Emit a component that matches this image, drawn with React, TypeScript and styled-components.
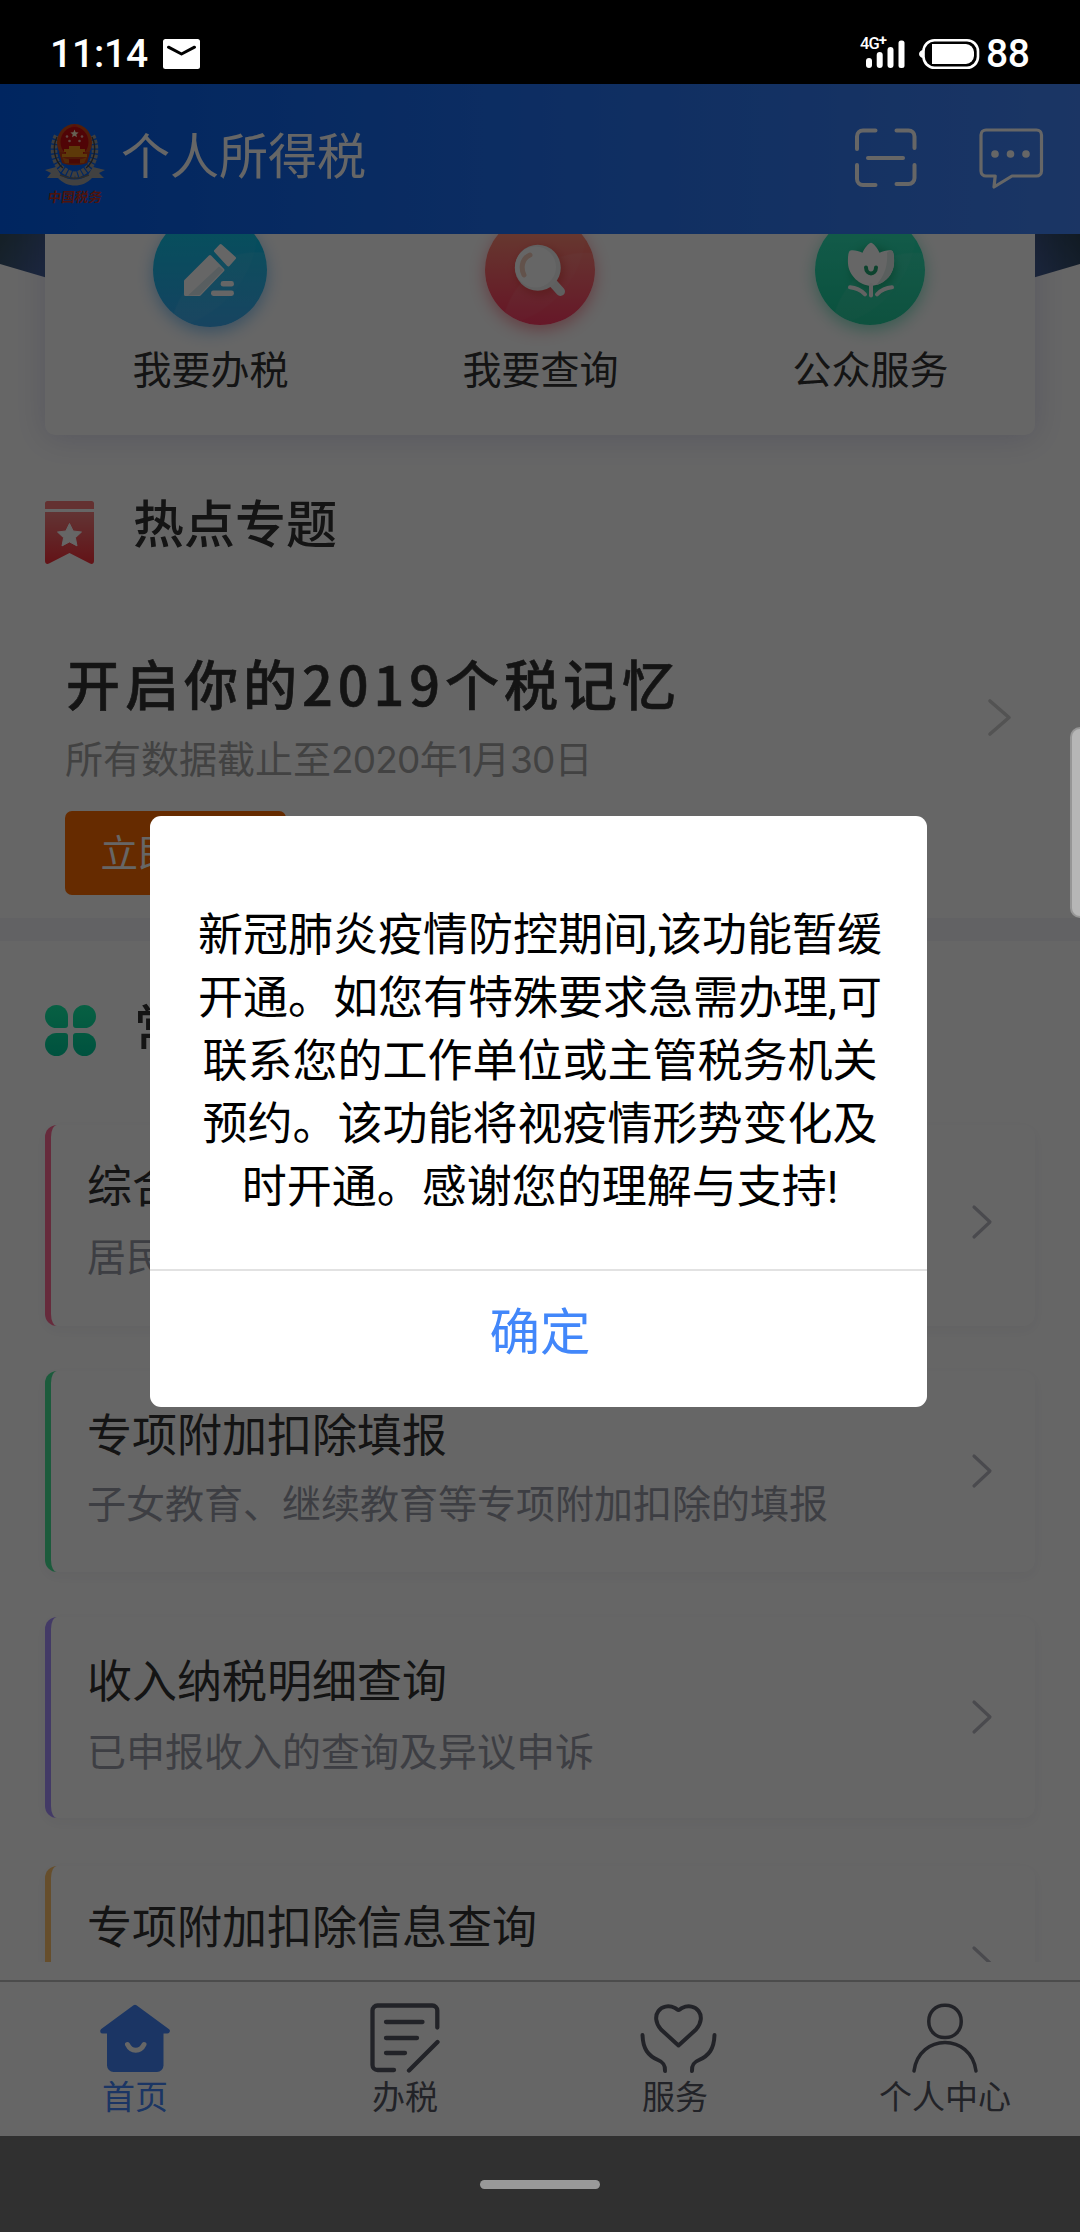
import React from 'react';
import styled, { createGlobalStyle } from 'styled-components';

const cjk = `"Noto Sans CJK SC", "Noto Sans", sans-serif`;
const latinFirst = `Roboto, "Noto Sans CJK SC", sans-serif`;

const GlobalStyle = createGlobalStyle`
  * { box-sizing: border-box; }
  body { margin: 0; background: #000; font-family: ${cjk}; }
  svg { display: block; flex: none; overflow: visible; }
`;

const Screen = styled.div`
  width: 1080px;
  height: 2232px;
  display: flex;
  flex-direction: column;
  overflow: hidden;
  position: relative;
`;

/* ---------- status bar ---------- */
const StatusBar = styled.div`
  height: 84px;
  flex: none;
  background: #000;
  color: #fff;
  display: flex;
  justify-content: space-between;
  padding: 24px 50px 0 50px;
  font-family: ${latinFirst};
  font-weight: 500;
`;
const StatusGroup = styled.div`
  display: flex;
  height: 60px;
  align-items: center;
`;
const Clock = styled.span`
  width: 113px;
  font-size: 39px;
  line-height: 62px;
  letter-spacing: -0.2px;
`;
const Percent = styled.span`
  margin-left: 6px;
  width: 44px;
  font-size: 39px;
  line-height: 60px;
  letter-spacing: -0.5px;
`;
const Network = styled.span`
  align-self: flex-start;
  margin-right: -21px;
  margin-top: 11px;
  font-size: 16.5px;
  line-height: 18px;
  width: 27px;
  letter-spacing: -0.9px;
`;
const NetworkPlus = styled.sup`
  font-size: 15px;
  line-height: 0;
  font-weight: 700;
  vertical-align: 4px;
`;
const StatusGap = styled.div`
  width: 14px;
`;

/* ---------- app ---------- */
const AppArea = styled.div`
  height: 2052px;
  flex: none;
  background: #fff;
  display: flex;
  flex-direction: column;
  position: relative;
`;
const Header = styled.header`
  height: 150px;
  flex: none;
  display: flex;
  align-items: center;
  padding: 0 37px 0 45px;
  background: linear-gradient(90deg, #005eef 0%, #4486fa 100%);
`;
const Brand = styled.div`
  width: 60px;
  height: 82px;
  margin-top: 12px;
  display: flex;
  flex-direction: column;
  align-items: center;
`;
const BrandName = styled.span`
  font-size: 13.5px;
  line-height: 18px;
  font-weight: 700;
  color: #c03222;
  transform: skewX(-8deg);
  margin-top: 1px;
  white-space: nowrap;
`;
const AppTitle = styled.h1`
  margin: 0 auto 12px 16px;
  font-size: 49px;
  line-height: 72px;
  font-weight: 400;
  color: #fff;
`;
const HeaderIcons = styled.div`
  display: flex;
  gap: 62px;
  margin-top: -2px;
`;

const Scroller = styled.main`
  height: 1728px;
  flex: none;
  overflow: hidden;
  position: relative;
`;
const HeroEdge = styled.svg`
  position: absolute;
  left: 0;
  top: 0;
`;
const QuickCard = styled.section`
  position: relative;
  margin: -60px 45px 0;
  height: 261px;
  padding-top: 39px;
  border-radius: 10px;
  background: #fff;
  display: grid;
  grid-template-columns: repeat(3, 1fr);
  box-shadow: 0 3px 32px rgba(70, 70, 170, 0.2);
`;
const QuickItem = styled.div`
  display: flex;
  flex-direction: column;
  align-items: center;
`;
const Bubble = styled.div<{ $size: number; $from: string; $to: string; $glow: string }>`
  width: ${p => p.$size}px;
  height: ${p => p.$size}px;
  margin: ${p => (114 - p.$size) / 2}px 0;
  border-radius: 50%;
  overflow: visible;
  background:
    radial-gradient(circle at 92% 112%, rgba(255, 255, 255, 0.07) 0 53%, transparent 54%),
    radial-gradient(circle at 0% 10%, rgba(255, 255, 255, 0.03) 0 68%, transparent 69%),
    linear-gradient(180deg, ${p => p.$from}, ${p => p.$to});
  box-shadow: 0 5px 16px ${p => p.$glow};
`;
const QuickLabel = styled.span`
  margin-top: 13px;
  padding-left: 1px;
  font-size: 39px;
  line-height: 54px;
  color: #333;
`;

const SectionHead = styled.div<{ $top: number }>`
  display: flex;
  align-items: center;
  height: 72px;
  margin-top: ${p => p.$top}px;
  padding-left: 45px;
`;
const SectionTitle = styled.h2<{ $gap: number; $lift: number }>`
  margin: 0 0 ${p => p.$lift * 2}px ${p => p.$gap}px;
  font-size: 51px;
  line-height: 72px;
  font-weight: 500;
  color: #333;
`;

const Topic = styled.section`
  height: 350px;
  display: flex;
  align-items: flex-start;
  justify-content: space-between;
  padding: 79px 69px 0 65px;
`;
const TopicText = styled.div`
  display: flex;
  flex-direction: column;
  align-items: flex-start;
`;
const TopicTitle = styled.div`
  padding-left: 1px;
  font-size: 54px;
  line-height: 72px;
  font-weight: 500;
  letter-spacing: 5px;
  color: #333;
  -webkit-text-stroke: 0.6px #333;
  white-space: nowrap;
`;
const TopicDate = styled.div`
  margin-top: 12px;
  height: 52px;
  font-size: 38px;
  line-height: 52px;
  font-weight: 400;
  color: #a6a6a6;
  white-space: nowrap;
`;
const Digits = styled.span`
  font-family: Inter, Roboto, sans-serif;
  font-size: 37px;
  line-height: 0;
  letter-spacing: -0.8px;
`;
const TopicButton = styled.div`
  margin-top: 28px;
  width: 221px;
  height: 84px;
  border-radius: 7px;
  background: #ff6b00;
  color: #fff;
  font-size: 37.5px;
  line-height: 80px;
  text-align: center;
`;
const TopicArrow = styled.div`
  margin-top: 52px;
`;
const Band = styled.div`
  height: 23px;
  background: #f4f4f9;
`;

const ServiceCard = styled.article<{ $accent: string; $gap: number; $pad: number }>`
  height: 201px;
  margin: ${p => p.$gap}px 45px 0;
  padding: ${p => p.$pad}px 43px 0 36px;
  border-radius: 12px;
  border-left: 6px solid ${p => p.$accent};
  background: #fff;
  box-shadow: 0 4px 14px rgba(30, 40, 90, 0.05);
  display: flex;
  justify-content: space-between;
`;
const ServiceTitle = styled.div`
  font-size: 45px;
  line-height: 64px;
  color: #333;
`;
const ServiceNote = styled.div<{ $gap: number }>`
  margin-top: ${p => p.$gap}px;
  font-size: 39px;
  line-height: 56px;
  color: #9a9ca7;
`;
const ServiceArrow = styled.div`
  margin-top: 53px;
`;

const TabBar = styled.nav`
  margin-top: 18px;
  height: 156px;
  border-top: 2px solid #bebebe;
  display: grid;
  grid-template-columns: repeat(4, 1fr);
`;
const Tab = styled.div<{ $active?: boolean }>`
  display: flex;
  flex-direction: column;
  align-items: center;
  padding-top: 21px;
  font-size: 33px;
  line-height: 46px;
  color: ${p => (p.$active ? '#4486fa' : '#565864')};
`;
const TabLabel = styled.span`
  margin-top: -1px;
`;

/* ---------- dialog ---------- */
const Overlay = styled.div`
  position: absolute;
  inset: 0;
  background: rgba(0, 0, 0, 0.6);
`;
const Dialog = styled.div`
  position: absolute;
  left: 150px;
  top: 732px;
  width: 777px;
  height: 591px;
  border-radius: 11px;
  background: #fff;
  display: flex;
  flex-direction: column;
`;
const Message = styled.div`
  height: 453px;
  padding: 88px 0 0 3px;
  text-align: center;
  font-family: ${latinFirst};
  font-size: 45px;
  line-height: 63px;
  color: #000;
`;
const MessageLine = styled.div`
  white-space: nowrap;
`;
const Confirm = styled.div`
  flex: 1;
  padding-left: 3px;
  border-top: 2px solid #e2e2e2;
  color: #4287fa;
  font-size: 50.5px;
  line-height: 115px;
  text-align: center;
`;
const EdgeHandle = styled.div`
  position: absolute;
  right: 0;
  top: 643px;
  width: 10px;
  height: 191px;
  border-radius: 10px 0 0 10px;
  background: #b6b6b6;
  border: 2px solid #969696;
  border-right: 0;
`;

const NavArea = styled.div`
  height: 96px;
  flex: none;
  background: #303030;
  display: flex;
  justify-content: center;
  padding-top: 44px;
`;
const HomePill = styled.div`
  width: 120px;
  height: 9px;
  border-radius: 5px;
  background: #999;
`;

/* ---------- icons ---------- */
const MailIcon = () => (
  <svg width="37" height="30" viewBox="0 0 37 30">
    <rect width="37" height="30" rx="2.5" fill="#fff" />
    <path d="M5.5 8.2 18.5 15 31.5 8.2" fill="none" stroke="#000" strokeWidth="3" strokeLinecap="round" strokeLinejoin="round" />
  </svg>
);

const SignalIcon = () => (
  <svg width="39" height="30" viewBox="0 0 39 30" fill="#fff">
    <rect x="0" y="19" width="6" height="10" rx="3" />
    <rect x="10.7" y="13" width="6" height="16" rx="3" />
    <rect x="21.5" y="8" width="6" height="21" rx="3" />
    <rect x="32.5" y="1.5" width="6" height="27.5" rx="2.5" />
  </svg>
);

const BatteryIcon = () => (
  <svg width="61" height="30" viewBox="0 0 61 30">
    <path d="M4.5 11v8C2 19 0 17 0 15s2-4 4.5-4Z" fill="#fff" />
    <rect x="4.5" y="1.3" width="54.5" height="27.4" rx="11" fill="none" stroke="#fff" strokeWidth="2.6" />
    <path d="M13 5h34a8.500 8.500 0 0 1 8 8v4a8.500 8.500 0 0 1-8 8H13Z" fill="#fff" />
  </svg>
);

const Emblem = () => (
  <svg width="60" height="62" viewBox="0 0 60 62">
    <g fill="none" stroke="#9c9c9c" strokeWidth="6.500" strokeDasharray="3.500 1.200">
      <path d="M12 12C7 22 8 38 17 45c4 3 8 5 13 6" />
      <path d="M47 12c5 10 4 26-5 33-4 3-7 5-12 6" />
    </g>
    <g fill="none" stroke="#444" strokeWidth="1.400">
      <path d="M12 13C7 23 9 37 18 44" />
      <path d="M47 13c5 10 3 24-6 31" />
    </g>
    <ellipse cx="29.500" cy="18.500" rx="17.500" ry="18.500" fill="#d04a18" />
    <path d="M14 28l3 11c8 3 17 3 25 0l3-11Z" fill="#c43c14" />
    <path d="M29.500 0l4 3.500-4 2-4-2Z" fill="#e02a20" />
    <ellipse cx="29.500" cy="18" rx="14" ry="15" fill="#c80a10" />
    <path d="M29.500 5.500l1.100 2.800 3 .2-2.300 1.900.7 2.900-2.500-1.600-2.500 1.600.7-2.900-2.300-1.900 3-.2Z" fill="#fff2d0" />
    <g fill="#eeb0a0">
      <circle cx="22" cy="12.500" r="1.300" /><circle cx="37" cy="12.500" r="1.300" />
      <circle cx="24.500" cy="17" r="1.300" /><circle cx="34.500" cy="17" r="1.300" />
    </g>
    <path d="M24 22h11v3h5v3h-2v2h4v3H17v-3h4v-2h-2v-3h5Z" fill="#e89018" />
    <path d="M17 33c7 4 18 4 25 0l-3 6H20Z" fill="#d06a18" />
    <path d="M24 35h11v4.500H24Z" fill="#b8180e" />
    <path d="M0 46l11-3 5 8c7 6 20 6 27 0l5-8 12 3-6 3 5 5-12 0C38 64 22 64 13 54L2 54l4-5Z" fill="#a4a4a4" />
    <path d="M15 51c9 4 20 4 29 0" fill="none" stroke="#6b6b6b" strokeWidth="1.600" />
  </svg>
);

const ScanIcon = () => (
  <svg width="62" height="60" viewBox="0 0 62 60" fill="none" stroke="#fff" strokeWidth="4" strokeLinecap="round">
    <path d="M20.500 2.500H8a6 6 0 0 0-6 6v12.500" />
    <path d="M41.500 2.500h12a6 6 0 0 1 6 6v11.500" />
    <path d="M2 37v14a6 6 0 0 0 6 6h12.500" />
    <path d="M59.500 37v13a6 6 0 0 1-6 6h-12" />
    <path d="M13 30h35" />
  </svg>
);

const ChatIcon = () => (
  <svg width="64" height="61" viewBox="0 0 64 61">
    <path d="M7 2h50.500a5 5 0 0 1 5 5v36a5 5 0 0 1-5 5H33L15 59l1.200-11H7a5 5 0 0 1-5-5V7a5 5 0 0 1 5-5Z" fill="none" stroke="#fff" strokeWidth="3.200" strokeLinejoin="round" />
    <g fill="#fff"><circle cx="16" cy="26" r="3.800" /><circle cx="31.500" cy="26" r="3.800" /><circle cx="47" cy="26" r="3.800" /></g>
  </svg>
);

const PencilIcon = () => (
  <svg width="114" height="114" viewBox="0 0 114 114" fill="#fff" stroke="#fff" strokeWidth="3" strokeLinejoin="round">
    <path d="M32.500 81.500V68L57 43.500 70 57 46.500 81.500Z" />
    <path d="M35 82.500 66 53.500 70.500 57 46.500 82Z" fill="#dbeaf0" stroke="none" />
    <path d="M67.700 32.500 81.500 45 75.300 52 62.500 38Z" />
    <rect x="67.700" y="68" width="13.200" height="5.600" rx="2.400" stroke="none" />
    <rect x="58" y="77.600" width="22.900" height="5.400" rx="2.400" stroke="none" />
  </svg>
);

const SoftShade = styled.circle<{ $blur: number }>`
  filter: blur(${p => p.$blur}px);
`;

const SearchIcon = () => (
  <svg width="110" height="110" viewBox="0 0 110 110">
    <SoftShade $blur={4} cx="55" cy="56" r="24" fill="#c02010" opacity="0.35" />
    <path d="M67 67l8.500 9.500" stroke="#ededed" strokeWidth="9" strokeLinecap="round" />
    <circle cx="52.800" cy="52.800" r="23" fill="#f2f2f2" />
    <circle cx="50.500" cy="52" r="20.500" fill="#fff" />
    <path d="M45 40c-9 4-9 14-6 20" fill="none" stroke="#f4cdbb" strokeWidth="5" strokeLinecap="round" />
  </svg>
);

const TulipIcon = () => (
  <svg width="110" height="110" viewBox="0 0 110 110">
    <SoftShade $blur={5} cx="58" cy="54" r="22" fill="#007a3c" opacity="0.4" />
    <path d="M56 27.700c2 0 7 6 8.500 10 4-2 9-3 12-2.300 2.500.6 2.800 8 2.500 13-.6 12-12 22.300-23 22.300S33.600 60.400 33 48.400c-.3-5 0-12.400 2.500-13 3-.7 8 .3 12 2.300 1.500-4 6.500-10 8.500-10Z" fill="#fff" />
    <path d="M72 37.500c1 14-3 24-11 32.500 10-2 17.500-11 18-21.500.3-5 0-12.500-2.500-13-1.500 0-3 .7-4.500 2Z" fill="#e2eeea" />
    <path d="M51 52.500c.3 8 9.700 8 10 0" fill="none" stroke="#22a873" strokeWidth="4" strokeLinecap="round" />
    <g fill="none" stroke="#f6f6f6" strokeWidth="4" strokeLinecap="round">
      <path d="M56 70v10.500" />
      <path d="M35 72.300c6 .5 11 3 15 7" />
      <path d="M77 72.300c-6 .5-11 3-15 7" />
    </g>
  </svg>
);

const BookmarkIcon = () => (
  <svg width="49" height="63" viewBox="0 0 49 63">
    <defs>
      <linearGradient id="ribbon" x1="0" y1="0" x2="0" y2="1">
        <stop offset="0" stopColor="#f48282" />
        <stop offset="1" stopColor="#f8303a" />
      </linearGradient>
    </defs>
    <path d="M2.500 0h44A2.500 2.500 0 0 1 49 2.500V8H0V2.500A2.500 2.500 0 0 1 2.500 0Z" fill="#f97c7c" />
    <path d="M0 11h49v49c0 2.500-2 3.500-4 2.500L24.500 52 4 62.500C2 63.500 0 62.500 0 60Z" fill="url(#ribbon)" />
    <path d="M24.500 22.500l3.700 7.500 8.300 1-6.100 5.700 1.600 8.200-7.500-4-7.500 4 1.600-8.200-6.100-5.700 8.300-1Z" fill="#fff" stroke="#fff" strokeWidth="1" strokeLinejoin="round" />
  </svg>
);

const CloverIcon = () => (
  <svg width="51" height="51" viewBox="0 0 51 51">
    <defs>
      <linearGradient id="leaf" gradientUnits="userSpaceOnUse" x1="0" y1="0" x2="0" y2="51">
        <stop offset="0" stopColor="#14f0a8" />
        <stop offset="1" stopColor="#00cc9c" />
      </linearGradient>
    </defs>
    <g fill="url(#leaf)">
      <path d="M11.500 0A11.500 11.500 0 0 1 23 11.500V20a3 3 0 0 1-3 3h-8.500a11.500 11.500 0 0 1 0-23Z" />
      <path d="M39.500 0a11.500 11.500 0 0 1 0 23H31a3 3 0 0 1-3-3v-8.500A11.500 11.500 0 0 1 39.500 0Z" />
      <path d="M11.500 28H20a3 3 0 0 1 3 3v8.500A11.500 11.500 0 1 1 11.500 28Z" />
      <path d="M31 28h8.500A11.500 11.500 0 1 1 28 39.500V31a3 3 0 0 1 3-3Z" />
    </g>
  </svg>
);

const Chevron = ({ w, h, stroke, color }: { w: number; h: number; stroke: number; color: string }) => (
  <svg width={w} height={h} viewBox={`0 0 ${w} ${h}`} fill="none" stroke={color} strokeWidth={stroke} strokeLinecap="round" strokeLinejoin="round">
    <path d={`M2 2 L${w - 2} ${h / 2} L2 ${h - 2}`} />
  </svg>
);

const HomeIcon = () => (
  <svg width="70" height="70" viewBox="0 0 70 70">
    <path d="M35 4.200 67.300 28 64 28H6L2.700 28Z" fill="currentColor" stroke="currentColor" strokeWidth="5" strokeLinejoin="round" />
    <path d="M7 27H63.500V62.500a6.500 6.500 0 0 1-6.500 6.500H13.500A6.500 6.500 0 0 1 7 62.500Z" fill="currentColor" />
    <path d="M27.500 41.500c3.500 7.500 13 7.500 16.500 0" fill="none" stroke="#fff" strokeWidth="5" strokeLinecap="round" />
  </svg>
);

const FormIcon = () => (
  <svg width="70" height="70" viewBox="0 0 70 70" fill="none" stroke="currentColor" strokeWidth="4.300" strokeLinecap="round">
    <path d="M67.300 24.500V7.500a5 5 0 0 0-5-5H7.500a5 5 0 0 0-5 5v54.500a5 5 0 0 0 5 5H24" />
    <path d="M16 19h36.500M16 35h31M16 50h19M67.500 39 39 67.500" />
  </svg>
);

const CareIcon = () => (
  <svg width="70" height="70" viewBox="-7 0 70 70" fill="none" stroke="currentColor" strokeWidth="4" strokeLinecap="round" strokeLinejoin="round">
    <g transform="translate(-7 0)">
      <path d="M38.500 42.500 21 26.500c-12-14 .5-28 14-21.500 2.500 1.500 2.500 2 3.500 2s1-.5 3.500-2c13.500-6.500 26 7.500 14 21.500Z" />
      <path d="M2.500 32C3 46 8 52.500 18 57c5 2 7.500 4.500 7 11" />
      <path d="M74.500 32C74 46 69 52.500 59 57c-5 2-7.500 4.500-7 11" />
    </g>
  </svg>
);

const UserIcon = () => (
  <svg width="66" height="70" viewBox="0 0 66 70" fill="none" stroke="currentColor" strokeWidth="3.500" strokeLinecap="round">
    <rect x="16.800" y="2.200" width="32.400" height="32.400" rx="15.500" />
    <path d="M2 68c5-38 57-38 62 0" />
  </svg>
);

const services = [
  { title: '综合所得年度汇算', note: '居民个人综合所得年度汇算', accent: '#ff6b96', gap: 57, pad: 27, noteGap: 10 },
  { title: '专项附加扣除填报', note: '子女教育、继续教育等专项附加扣除的填报', accent: '#46e496', gap: 45, pad: 30, noteGap: 8 },
  { title: '收入纳税明细查询', note: '已申报收入的查询及异议申诉', accent: '#a891ff', gap: 45, pad: 30, noteGap: 10 },
  { title: '专项附加扣除信息查询', note: '', accent: '#ffc46e', gap: 48, pad: 27, noteGap: 10 },
];

const message = [
  '新冠肺炎疫情防控期间,该功能暂缓',
  '开通。如您有特殊要求急需办理,可',
  '联系您的工作单位或主管税务机关',
  '预约。该功能将视疫情形势变化及',
  '时开通。感谢您的理解与支持!',
];

export default function App() {
  return (
    <Screen lang="zh-CN">
      <GlobalStyle />
      <StatusBar>
        <StatusGroup>
          <Clock>11:14</Clock>
          <MailIcon />
        </StatusGroup>
        <StatusGroup>
          <Network>4G<NetworkPlus>+</NetworkPlus></Network>
          <SignalIcon />
          <StatusGap />
          <BatteryIcon />
          <Percent>88</Percent>
        </StatusGroup>
      </StatusBar>

      <AppArea>
        <Header>
          <Brand>
            <Emblem />
            <BrandName>中国税务</BrandName>
          </Brand>
          <AppTitle>个人所得税</AppTitle>
          <HeaderIcons>
            <ScanIcon />
            <ChatIcon />
          </HeaderIcons>
        </Header>

        <Scroller>
          <HeroEdge width="1080" height="50" viewBox="0 0 1080 50">
            <defs>
              <linearGradient id="heroLeft" x1="0" y1="0" x2="1" y2="0.6">
                <stop offset="0" stopColor="#34505f" />
                <stop offset="1" stopColor="#445f96" />
              </linearGradient>
              <linearGradient id="heroRight" x1="0" y1="0.6" x2="1" y2="0">
                <stop offset="0" stopColor="#405b8c" />
                <stop offset="1" stopColor="#2b4358" />
              </linearGradient>
            </defs>
            <path d="M0 0H46V43.500L0 30Z" fill="url(#heroLeft)" />
            <path d="M1034 0H1080V30L1034 43.500Z" fill="url(#heroRight)" />
          </HeroEdge>
          <QuickCard>
            <QuickItem>
              <Bubble $size={114} $from="#04c8e6" $to="#2ca4f0" $glow="rgba(30,150,240,.5)"><PencilIcon /></Bubble>
              <QuickLabel>我要办税</QuickLabel>
            </QuickItem>
            <QuickItem>
              <Bubble $size={110} $from="#ff9a78" $to="#ff2c58" $glow="rgba(250,60,80,.5)"><SearchIcon /></Bubble>
              <QuickLabel>我要查询</QuickLabel>
            </QuickItem>
            <QuickItem>
              <Bubble $size={110} $from="#2ce6ba" $to="#12c896" $glow="rgba(20,200,150,.5)"><TulipIcon /></Bubble>
              <QuickLabel>公众服务</QuickLabel>
            </QuickItem>
          </QuickCard>

          <SectionHead $top={61}>
            <BookmarkIcon />
            <SectionTitle $gap={39} $lift={11}>热点专题</SectionTitle>
          </SectionHead>

          <Topic>
            <TopicText>
              <TopicTitle>开启你的2019个税记忆</TopicTitle>
              <TopicDate>
                所有数据截止至<Digits>2020</Digits>年<Digits>1</Digits>月<Digits>30</Digits>日
              </TopicDate>
              <TopicButton>立即查看</TopicButton>
            </TopicText>
            <TopicArrow>
              <Chevron w={23} h={37} stroke={3.6} color="#cfcfcf" />
            </TopicArrow>
          </Topic>
          <Band />

          <SectionHead $top={53}>
            <CloverIcon />
            <SectionTitle $gap={38} $lift={5}>常用业务</SectionTitle>
          </SectionHead>

          {services.map(s => (
            <ServiceCard key={s.title} $accent={s.accent} $gap={s.gap + (s.gap === 57 ? 2 : 0)} $pad={s.pad}>
              <div>
                <ServiceTitle>{s.title}</ServiceTitle>
                <ServiceNote $gap={s.noteGap}>{s.note}</ServiceNote>
              </div>
              <ServiceArrow>
                <Chevron w={20} h={34} stroke={3.2} color="#b9b9c2" />
              </ServiceArrow>
            </ServiceCard>
          ))}
        </Scroller>

        <TabBar>
          <Tab $active><HomeIcon /><TabLabel>首页</TabLabel></Tab>
          <Tab><FormIcon /><TabLabel>办税</TabLabel></Tab>
          <Tab><CareIcon /><TabLabel>服务</TabLabel></Tab>
          <Tab><UserIcon /><TabLabel>个人中心</TabLabel></Tab>
        </TabBar>

        <Overlay>
          <Dialog>
            <Message>
              {message.map(line => <MessageLine key={line}>{line}</MessageLine>)}
            </Message>
            <Confirm>确定</Confirm>
          </Dialog>
          <EdgeHandle />
        </Overlay>
      </AppArea>

      <NavArea>
        <HomePill />
      </NavArea>
    </Screen>
  );
}
